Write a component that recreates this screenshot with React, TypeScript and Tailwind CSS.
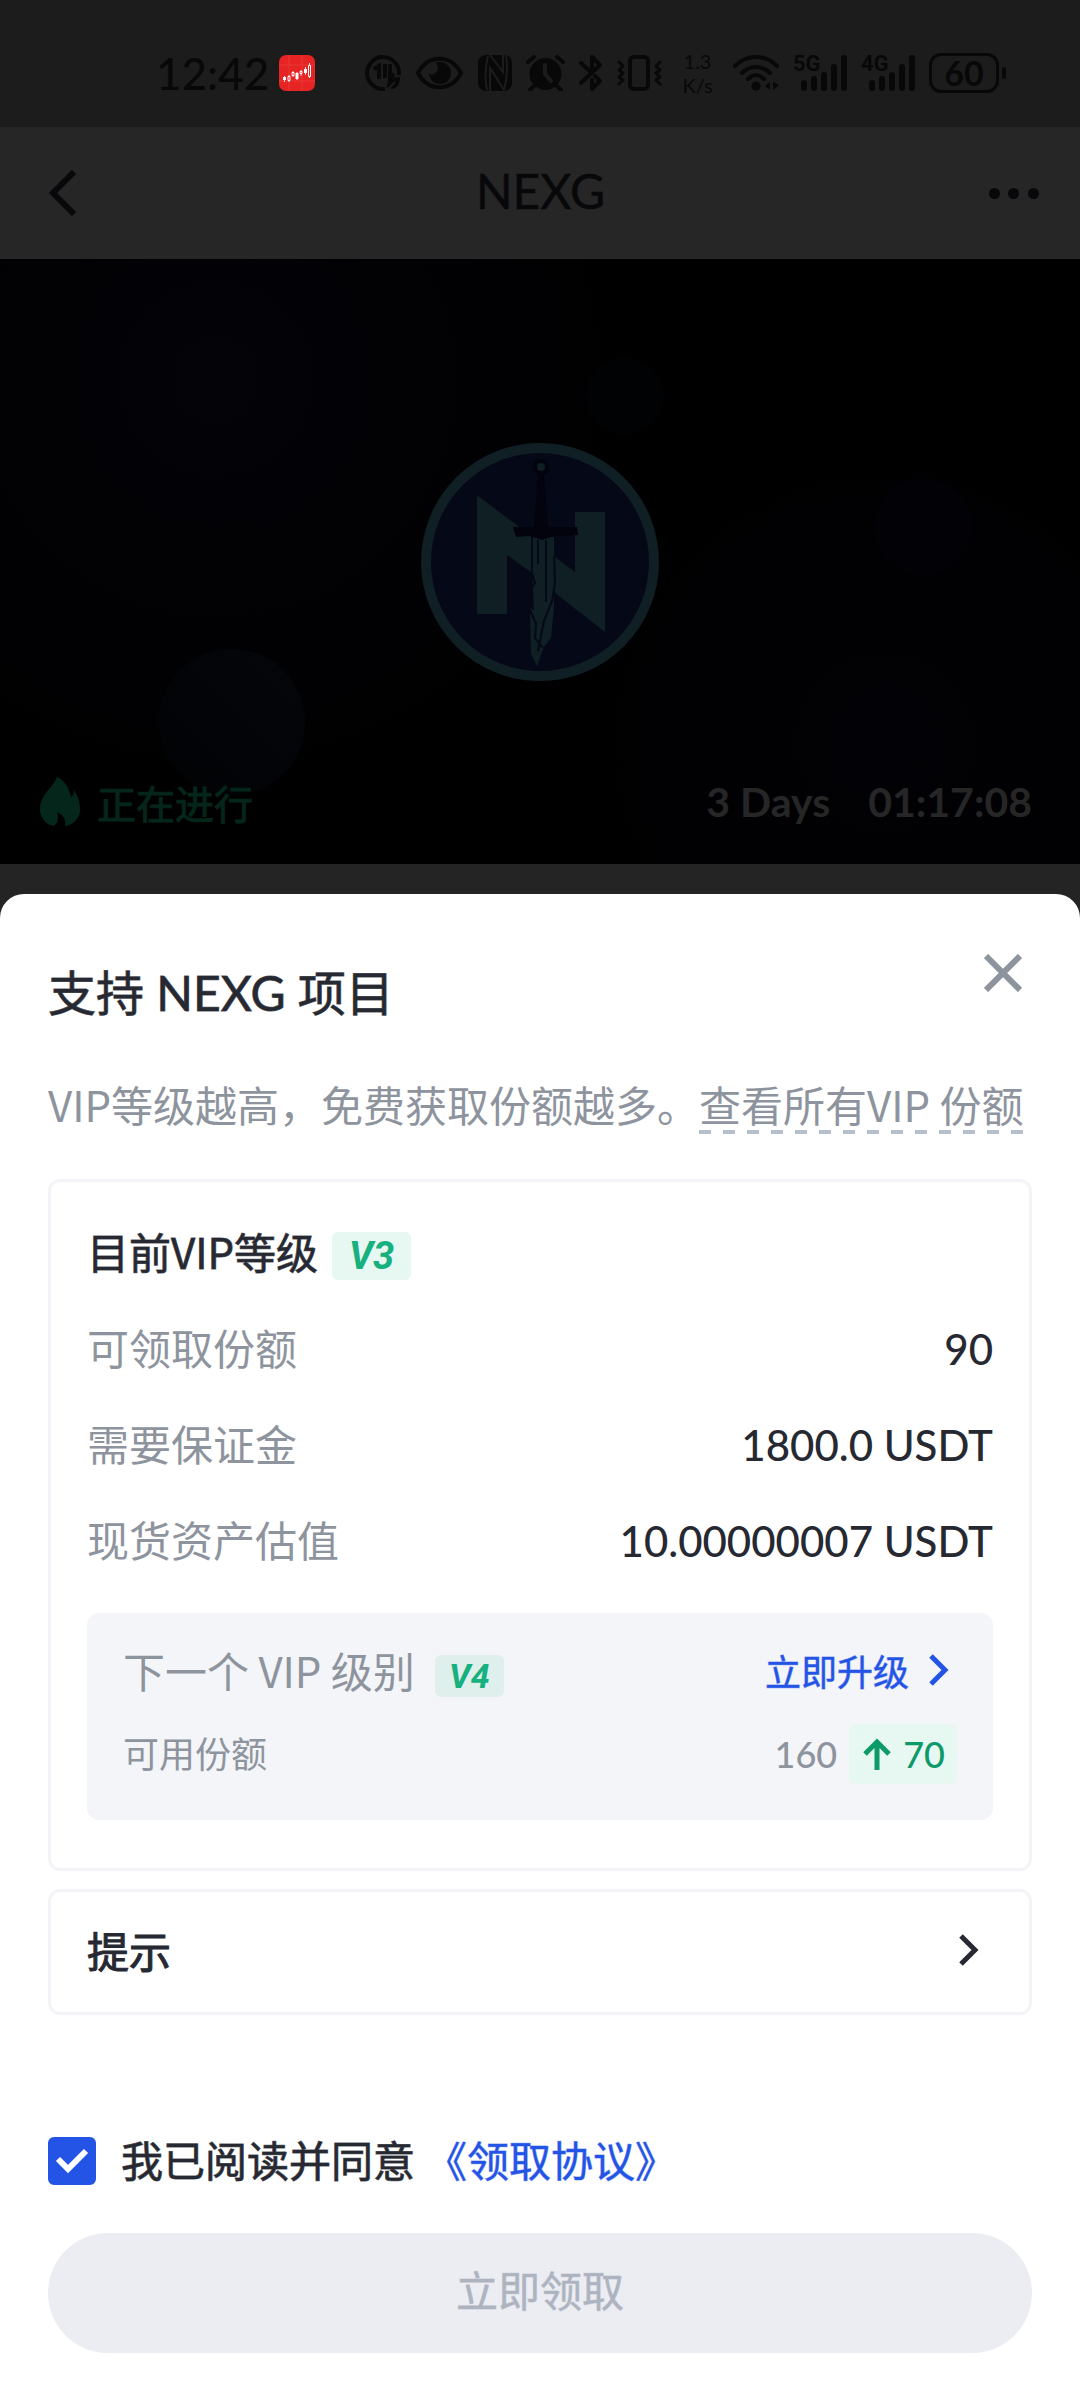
import { useState } from 'react'

const rows = [
  { label: '可领取份额', value: '90' },
  { label: '需要保证金', value: '1800.0 USDT' },
  { label: '现货资产估值', value: '10.00000007 USDT' },
]

function Chevron({ className }: { className: string }) {
  return (
    <svg viewBox="0 0 20 32" fill="none" stroke="currentColor" strokeWidth="5" className={className}>
      <path d="M2 2l14 14L2 30" />
    </svg>
  )
}

function Signal({ label }: { label: string }) {
  return (
    <span className="relative block">
      <span className="absolute -top-1 left-0 font-['Roboto',sans-serif] text-[22px] leading-[26px] font-bold">{label}</span>
      <svg viewBox="0 0 54 36" className="h-9 w-[54px]" fill="currentColor">
        <rect x="8" y="25" width="6" height="11" rx="3" />
        <rect x="18" y="21" width="6" height="15" rx="3" />
        <rect x="28" y="17" width="6" height="19" rx="3" />
        <rect x="38" y="9" width="6" height="27" rx="3" />
        <rect x="48" y="0" width="6" height="36" rx="3" />
      </svg>
    </span>
  )
}

function StatusBar() {
  return (
    <div className="flex h-[127px] items-center bg-[#1c1c1c] pt-[18px] pr-[74px] pl-[156px] font-['Lato','Noto_Sans_CJK_SC',sans-serif] text-[#080808]">
      <span className="text-[44px] leading-[48px] font-medium">12:42</span>
      <svg viewBox="0 0 36 36" className="ml-[10px] h-9 w-9">
        <rect width="36" height="36" rx="7" fill="#e62424" />
        <path d="M10 0v36M23 0v36M0 10h36M0 26h36" stroke="#ea3634" strokeWidth="1" />
        <path
          d="M5.500 21v6M10 20v7M14 16v6M18 17v8M22 15v6M26.500 12v8M30.500 8v15"
          stroke="#fbd9d7"
          strokeWidth="1"
        />
        <path d="M4 22h3v3H4zM16.500 18h3v6h-3zM25 14h3v4h-3z" fill="#fff" />
        <path
          d="M9 21.500h2v4H9zM13 17.500h2v3h-2zM21 16.500h2v2h-2zM29.500 10.500h2v11h-2z"
          fill="#e62424"
          stroke="#fff"
          strokeWidth="1"
        />
      </svg>
      <div className="ml-auto flex items-center gap-[14px]">
        {/* data saver */}
        <svg viewBox="0 0 36 36" className="h-9 w-9" fill="none" stroke="currentColor">
          <path d="M20 34A16 16 0 1 1 34 20" strokeWidth="4" />
          <path d="M9 14l5-3v13M20 9v14M25 9v14l4-4" strokeWidth="4" />
          <path d="M22 34c-1-8 4-12 13-12 0 9-5 14-11 11z" fill="currentColor" stroke="none" />
          <path d="M22 35l8-8" stroke="#1c1c1c" strokeWidth="2" />
        </svg>
        {/* eye comfort */}
        <svg viewBox="0 0 49 36" className="h-9 w-[49px]">
          <path
            d="M3 18C13 -1 36 -1 46 18 36 37 13 37 3 18z"
            fill="none"
            stroke="currentColor"
            strokeWidth="4"
            strokeLinejoin="round"
          />
          <circle cx="25" cy="18" r="11" fill="currentColor" />
          <path d="M20 7c4 3 4 9-1 12-2 1-4 0-6-1 0-5 3-9 7-11z" fill="#1c1c1c" />
        </svg>
        {/* nfc */}
        <svg viewBox="0 0 34 36" className="h-9 w-[34px]">
          <rect width="34" height="36" rx="8" fill="currentColor" />
          <path
            d="M10 1C7 12 7 24 9 35M12 0l13 17V0M12 36V13l14 22M28 0c2 12 1 24-2 35"
            fill="none"
            stroke="#1c1c1c"
            strokeWidth="2"
          />
        </svg>
        {/* alarm */}
        <svg viewBox="0 0 39 36" className="h-9 w-[39px]" fill="none" strokeLinecap="round">
          <circle cx="19.500" cy="19" r="16" fill="currentColor" />
          <path d="M2 7l6-5M37 7l-6-5M8 31l-4 4M31 31l4 4" stroke="currentColor" strokeWidth="4" />
          <path d="M19 10v9l6 7" stroke="#1c1c1c" strokeWidth="4" />
        </svg>
        {/* bluetooth */}
        <svg
          viewBox="0 0 24 36"
          className="h-9 w-6"
          fill="none"
          stroke="currentColor"
          strokeWidth="4"
          strokeLinecap="round"
          strokeLinejoin="round"
        >
          <path d="M2 8l11 10M2 28L21 10l-8-8v14M13 25v9l8-8-5-5" />
        </svg>
        {/* vibrate */}
        <svg
          viewBox="0 0 45 36"
          className="h-9 w-[45px]"
          fill="none"
          stroke="currentColor"
          strokeWidth="4"
          strokeLinejoin="round"
          strokeLinecap="round"
        >
          <rect x="13" y="2" width="18" height="32" rx="4" />
          <path d="M2 7l4 4-4 4 4 3-4 4 4 3-4 4M43 7l-4 4 4 4-4 3 4 4-4 3 4 4" strokeWidth="3" />
        </svg>
        <span className="flex w-[43px] flex-col items-center text-[20px] leading-[24px]">
          <span>1.3</span>
          <span>K/s</span>
        </span>
        {/* wifi */}
        <svg
          viewBox="0 0 46 36"
          className="h-9 w-[46px]"
          fill="none"
          stroke="currentColor"
          strokeWidth="4"
          strokeLinecap="round"
        >
          <path d="M2 11c12-12 30-12 42 0M9 18c8-8 20-8 28 0M15 24c5-5 11-5 16 0" />
          <circle cx="23" cy="31" r="4.500" fill="currentColor" stroke="none" />
          <path d="M37 27v8l-5-4zM40 27v8l6-5z" fill="currentColor" stroke="none" />
        </svg>
        <Signal label="5G" />
        <Signal label="4G" />
        <div className="flex items-center gap-[3px]">
          <span className="flex h-10 w-[70px] items-center justify-center rounded-xl border-[3px] border-current text-[34px] leading-[34px] font-bold">
            60
          </span>
          <span className="h-3 w-1 rounded-full bg-current" />
        </div>
      </div>
    </div>
  )
}

function TokenLogo() {
  return (
    <svg viewBox="0 0 240 240" className="h-60 w-60" role="img" aria-label="NEXG">
      <circle cx="120" cy="120" r="114" fill="#050817" stroke="#0f1f24" strokeWidth="10" />
      <g fill="#0f1f24">
        <path d="M57 53L98 84l14 12v35L87 113v59H57z" />
        <path d="M135 115l20 15V70h30v120l-50-39z" />
        <path d="M112 95h22v70l-3 31-7 9-7 19-6-12-1-44 3-4z" />
      </g>
      <path
        d="M112 95v36l3 10-3 4 1 23M134 114l1 27-3 18-8 20-6 30M118 98v24M126 98v62M110 168l6 14-1 14 8 10"
        fill="none"
        stroke="#050817"
        strokeWidth="2"
      />
      <circle cx="121" cy="25" r="6" fill="#0f1f24" stroke="#02030c" strokeWidth="4" />
      <path d="M118 32h6l4 53h29l1 8-24 1-12 4-12-4-14 1-3-10h21z" fill="#02030c" />
    </svg>
  )
}

function Banner() {
  return (
    <section className="relative flex aspect-[1080/605] items-center justify-center overflow-hidden bg-black bg-[radial-gradient(circle_at_20%_20%,#030308,transparent_50%),radial-gradient(circle_at_82%_80%,#020206,transparent_40%)]">
      <svg viewBox="0 0 1080 605" className="absolute inset-0 h-full w-full" aria-hidden="true">
        <defs>
          <linearGradient id="bubble" x1="1" y1="0" x2="0" y2="1">
            <stop offset="0" stopColor="#05060a" />
            <stop offset="1" stopColor="#010204" />
          </linearGradient>
        </defs>
        <circle cx="232" cy="463" r="73" fill="url(#bubble)" />
        <circle cx="625" cy="137" r="39" fill="#010204" />
        <circle cx="923" cy="268" r="49" fill="#020206" />
      </svg>
      <div className="relative">
        <TokenLogo />
      </div>
      <div className="absolute inset-x-0 bottom-[34px] flex items-center justify-between pr-12 pl-10">
        <div className="flex items-center gap-[17px] text-[#05261b]">
          <svg viewBox="0 0 40 50" className="h-[50px] w-10" fill="currentColor">
            <path d="M17 0C12 12 0 18 0 32c0 9 6 16 14 17 5-4 4-9 3-14 7 3 9 8 8 14 9-1 15-8 15-17 0-8-3-14-6-19 0 4-1 6-3 7C29 10 24 3 17 0z" />
          </svg>
          <span className="text-[39px] leading-[56px] [-webkit-text-stroke:1px_#05261b]">正在进行</span>
        </div>
        <div className="flex gap-[38px] font-['Lato','Noto_Sans_CJK_SC',sans-serif] text-[41px] leading-[56px] font-bold text-[#262626]">
          <span>3 Days</span>
          <span>01:17:08</span>
        </div>
      </div>
    </section>
  )
}

export default function App() {
  const [agreed, setAgreed] = useState(true)

  return (
    <div className="flex min-h-screen flex-col bg-[#242424] font-['Noto_Sans_CJK_SC','Noto_Sans',sans-serif] text-[42px] leading-[60px] text-[#272932]">
      <StatusBar />
      <header className="flex h-[132px] items-center justify-between bg-[#262626] pr-[41px] pl-[42px] text-[#08080b]">
        <button aria-label="返回" className="w-[50px] pl-[2px]">
          <svg viewBox="0 0 36 46" className="h-[46px] w-9" fill="none" stroke="currentColor" strokeWidth="6">
            <path d="M30 2L9 23l21 21" />
          </svg>
        </button>
        <h1 className="pb-1 font-['Lato','Noto_Sans_CJK_SC',sans-serif] text-[48px] [-webkit-text-stroke:1px_#08080b80]">
          NEXG
        </h1>
        <button aria-label="更多" className="flex w-[50px] items-center justify-between">
          <span className="h-[11px] w-[11px] rounded-full bg-current" />
          <span className="h-[11px] w-[11px] rounded-full bg-current" />
          <span className="h-[11px] w-[11px] rounded-full bg-current" />
        </button>
      </header>
      <Banner />

      <div role="dialog" aria-labelledby="sheet-title" className="mt-[30px] flex-1 rounded-t-3xl bg-white px-12 pt-[60px] pb-12">
        <div className="flex items-start justify-between">
          <h2
            id="sheet-title"
            className="mt-[9px] font-['Lato','Noto_Sans_CJK_SC',sans-serif] text-[48px] [-webkit-text-stroke:1px_#272932c0]"
          >
            支持 NEXG 项目
          </h2>
          <button aria-label="关闭" className="mr-[10px] text-[#8e949e]">
            <svg viewBox="0 0 38 38" className="h-[38px] w-[38px]" fill="none" stroke="currentColor" strokeWidth="6">
              <path d="M2 2l34 34M36 2L2 36" />
            </svg>
          </button>
        </div>
        <p className="mt-[51px] whitespace-nowrap text-[#8e949e]">
          VIP等级越高，免费获取份额越多。
          <a
            href="#vip"
            className="inline-block bg-[repeating-linear-gradient(90deg,#b8bfcc_0_12px,transparent_12px_24px)] bg-[length:100%_4px] bg-bottom bg-no-repeat"
          >
            查看所有VIP 份额
          </a>
        </p>

        <section className="mt-[45px] rounded-xl border-[3px] border-[#f4f4f8] px-9 pt-[39px] pb-12">
          <div className="flex flex-col gap-9">
            <div className="flex items-baseline gap-[14px]">
              <span className="[-webkit-text-stroke:1px_#272932c0]">目前VIP等级</span>
              <span className="flex h-12 w-[79px] items-center justify-center rounded-md bg-[#e7f7f1] font-['Roboto',sans-serif] text-[38px] leading-[48px] font-bold text-[#17b07f] italic">
                V3
              </span>
            </div>
            {rows.map((row) => (
              <div key={row.label} className="flex items-baseline justify-between">
                <span className="text-[#8e949e]">{row.label}</span>
                <span className="font-['Lato','Noto_Sans_CJK_SC',sans-serif] leading-[48px] font-medium">{row.value}</span>
              </div>
            ))}
          </div>
          <div className="mt-11 rounded-xl bg-[#f4f5f8] px-9 pt-[27px] pb-9">
            <div className="flex items-center justify-between">
              <div className="flex items-baseline gap-5 text-[#8e949e]">
                <span>下一个 VIP 级别</span>
                <span className="flex h-[42px] w-[69px] items-center justify-center rounded-md bg-[#dfefec] font-['Roboto',sans-serif] text-[34px] leading-[42px] font-bold text-[#17b07f] italic">
                  V4
                </span>
              </div>
              <a href="#upgrade" className="flex items-center gap-5 pr-2 text-[36px] text-[#2354e6] [-webkit-text-stroke:1px_#2354e680]">
                立即升级
                <Chevron className="h-8 w-5" />
              </a>
            </div>
            <div className="mt-6 flex items-baseline justify-between text-[36px]">
              <span className="leading-[54px] text-[#8e949e]">可用份额</span>
              <div className="flex items-center gap-3 font-['Lato','Noto_Sans_CJK_SC',sans-serif] font-medium">
                <span className="text-[#8e949e]">160</span>
                <span className="flex h-[60px] items-center gap-[10px] rounded-md bg-[#e7f7f1] px-3 text-[#0b9a68]">
                  <svg viewBox="0 0 32 32" className="h-8 w-8" fill="none" stroke="currentColor" strokeWidth="5">
                    <path d="M16 32V3M4 16L16 4l12 12" />
                  </svg>
                  70
                </span>
              </div>
            </div>
          </div>
        </section>

        <button className="mt-[18px] flex w-full items-center justify-between rounded-xl border-[3px] border-[#f4f4f8] px-9 pt-7 pb-8 text-left">
          <span className="[-webkit-text-stroke:1px_#272932]">提示</span>
          <Chevron className="mr-[14px] h-8 w-5" />
        </button>

        <div className="mt-[114px] flex items-center">
          <span className="relative h-12 w-12">
            <input
              id="agree"
              type="checkbox"
              checked={agreed}
              onChange={(e) => setAgreed(e.target.checked)}
              className="peer block h-12 w-12 appearance-none rounded-md border-2 border-[#2354e6] checked:bg-[#2354e6]"
            />
            <svg
              viewBox="0 0 48 48"
              className="pointer-events-none absolute inset-0 hidden h-12 w-12 peer-checked:block"
              fill="none"
              stroke="#fff"
              strokeWidth="6"
            >
              <path d="M10 22l10 10 18-18" />
            </svg>
          </span>
          <div className="flex gap-[10px] pb-1 pl-[25px]">
            <label htmlFor="agree" className="[-webkit-text-stroke:1px_#272932c0]">
              我已阅读并同意
            </label>
            <a href="#agreement" className="text-[#2354e6] [-webkit-text-stroke:1px_#2354e680]">
              《领取协议》
            </a>
          </div>
        </div>

        <button
          disabled
          className="mt-10 h-[120px] w-full rounded-full bg-[#ebedf3] pb-2 text-[#adb3bf] [-webkit-text-stroke:1px_#adb3bf80]"
        >
          立即领取
        </button>
      </div>
    </div>
  )
}
